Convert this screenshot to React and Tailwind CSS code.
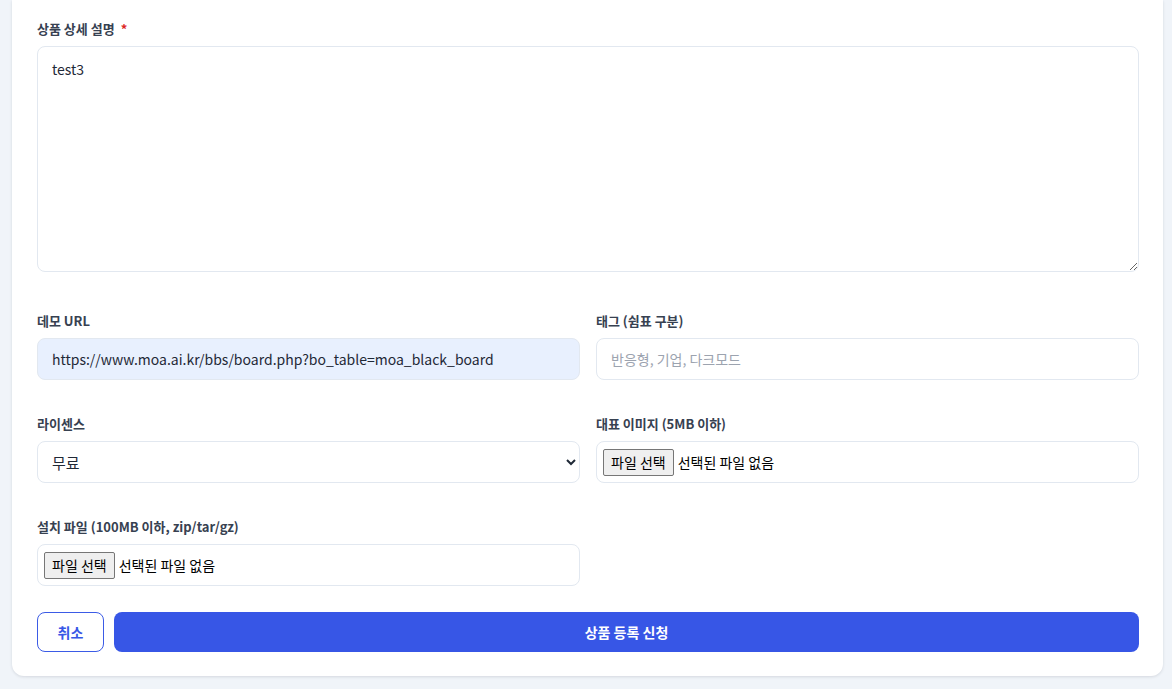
import React from 'react';

const font = { fontFamily: '"Noto Sans CJK KR", "Noto Sans", sans-serif' };

function Label({ children, required }) {
  return (
    <label className="block text-[13px] leading-5 font-bold text-[#374151] mb-[7px]">
      {children}
      {required && <span className="text-[#dc2626] ml-1.5">*</span>}
    </label>
  );
}

function FileBox() {
  return (
    <div className="h-[42px] w-full rounded-lg border border-[#e2e8f0] bg-white flex items-center px-[6px] text-[14px] text-black">
      <span className="h-[27px] px-[7px] flex items-center bg-[#efefef] border border-[#767676] rounded-[2px] mr-[4px]">
        파일 선택
      </span>
      <span>선택된 파일 없음</span>
    </div>
  );
}

export default function App() {
  return (
    <div className="min-h-[689px] bg-[#f0f4f9] pl-3 pr-[9px] pb-[13px]" style={font}>
      <div className="bg-white rounded-b-xl shadow-[0_1px_3px_rgba(15,23,42,0.12)] px-6 pt-[19px] pb-6">
        {/* 상세 설명 */}
        <div className="pl-px">
          <Label required>상품 상세 설명</Label>
          <textarea
            defaultValue="test3"
            className="block w-full h-[226px] rounded-lg border border-[#e2e8f0] px-[14px] py-[10px] text-[14px] leading-6 text-[#1f2937] outline-none resize-y"
          />
        </div>

        <div className="grid grid-cols-2 gap-x-4 gap-y-[34px] mt-[39px] pl-px">
          <div>
            <Label>데모 URL</Label>
            <input
              defaultValue="https://www.moa.ai.kr/bbs/board.php?bo_table=moa_black_board"
              className="block w-full h-[42px] rounded-lg border border-[#e2e8f0] bg-[#e8f0fe] px-[14px] text-[14px] text-[#1f2937] outline-none"
            />
          </div>
          <div>
            <Label>태그 (쉼표 구분)</Label>
            <input
              placeholder="반응형, 기업, 다크모드"
              className="block w-full h-[42px] rounded-lg border border-[#e2e8f0] bg-white px-[14px] text-[14px] text-[#1f2937] placeholder:text-[#9ca3af] outline-none"
            />
          </div>
          <div>
            <Label>라이센스</Label>
            <select
              defaultValue="free"
              className="block w-full h-[42px] rounded-lg border border-[#e2e8f0] bg-white pl-[10px] pr-2 text-[15px] text-[#1f2937] outline-none"
            >
              <option value="free">무료</option>
              <option value="paid">유료</option>
            </select>
          </div>
          <div>
            <Label>대표 이미지 (5MB 이하)</Label>
            <FileBox />
          </div>
          <div>
            <Label>설치 파일 (100MB 이하, zip/tar/gz)</Label>
            <FileBox />
          </div>
        </div>

        <div className="flex gap-[10px] mt-[26px] pl-px">
          <button className="h-10 w-[67px] rounded-lg border border-[#3b5be6] text-[#3756e6] text-[14px] font-bold bg-white">
            취소
          </button>
          <button className="h-10 flex-1 rounded-lg bg-[#3756e6] text-white text-[14px] font-bold">
            상품 등록 신청
          </button>
        </div>
      </div>
    </div>
  );
}
